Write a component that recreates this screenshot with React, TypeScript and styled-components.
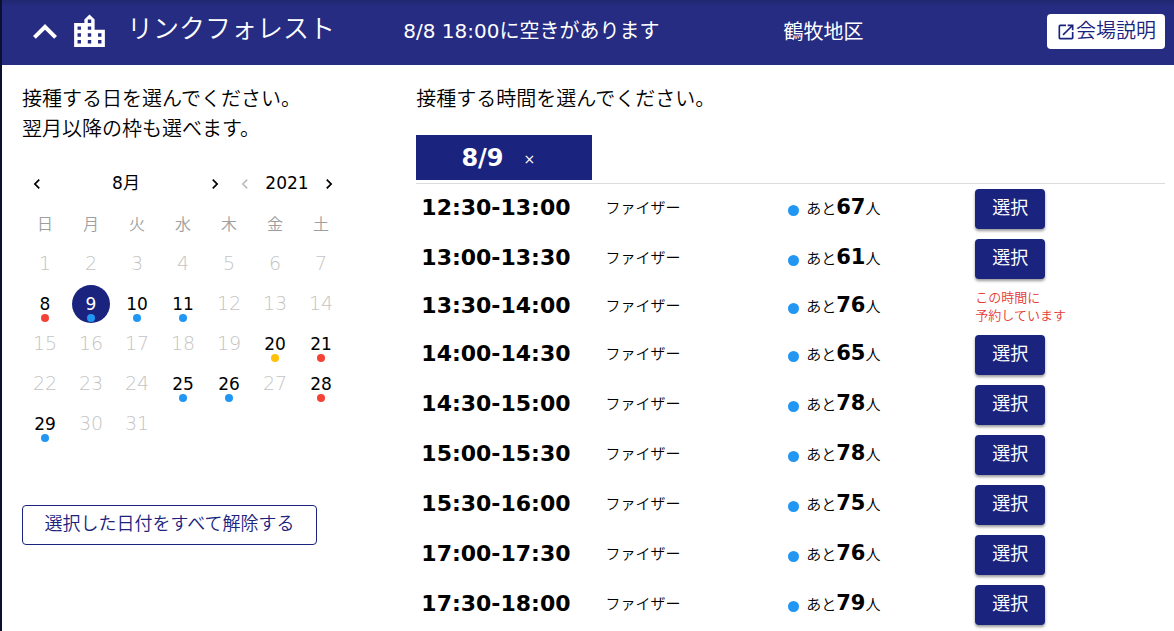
import React from "react";
import styled, { createGlobalStyle } from "styled-components";
import { MdKeyboardArrowUp, MdLocationCity, MdChevronLeft, MdChevronRight, MdOpenInNew } from "react-icons/md";

const NAVY = "#1a237e";
const BLUE = "#2196f3";
const RED = "#f44336";
const AMBER = "#ffc107";

const GlobalStyle = createGlobalStyle`
  * { box-sizing: border-box; }
  body {
    margin: 0;
    background: #fff;
    color: #000;
    font-family: "DejaVu Sans", "Noto Sans CJK JP", sans-serif;
    font-weight: 350;
    font-size: 20px;
    overflow-x: hidden;
    scrollbar-width: none;
  }
  button { font: inherit; cursor: pointer; margin: 0; }
  p { margin: 0; }
`;

const Page = styled.div`
  border-left: 2px solid #0c1030;
  min-height: 100vh;
`;

const Header = styled.header`
  display: grid;
  grid-template-columns: 34.5% 32.7% 1fr;
  align-items: center;
  height: 65px;
  padding: 0 9px 2px 0;
  background: linear-gradient(#20276f, #252c82 6px);
  color: #fff;
`;

const Venue = styled.div`
  display: flex;
  align-items: center;
  padding-left: 19px;
`;

const CollapseButton = styled.button`
  display: flex;
  padding: 0;
  border: 0;
  background: none;
  color: #fff;
  svg { display: block; }
`;

const BuildingIcon = styled(MdLocationCity)`
  margin-right: 17px;
`;

const VenueName = styled.h1`
  margin: 0;
  padding-bottom: 6px;
  font-size: 26px;
  font-weight: 350;
  line-height: 32px;
  white-space: nowrap;
`;

const Status = styled.p`
  padding-bottom: 4px;
  font-weight: 400;
`;

const Area = styled.div`
  display: flex;
  align-items: center;
  justify-content: space-between;
`;

const AreaName = styled.span`
  padding-bottom: 2px;
  font-weight: 400;
`;

const InfoButton = styled.button`
  display: flex;
  align-items: center;
  height: 35px;
  padding: 0 9px;
  border: 0;
  border-radius: 4px;
  background: #fff;
  color: ${NAVY};
  line-height: 35px;
  white-space: nowrap;
`;

const Main = styled.main`
  display: grid;
  grid-template-columns: 34.5% 1fr;
  padding: 19px 9px 0 20px;
`;

const Prompt = styled.p`
  line-height: 30px;
`;

const CalendarNav = styled.div`
  display: grid;
  grid-template-columns: 30px 1fr 30px 30px 54px 30px;
  align-items: center;
  width: 322px;
  height: 40px;
  margin-top: 19px;
  font-size: 17px;
  font-weight: 400;
  line-height: 24px;
  text-align: center;
`;

const NavButton = styled.button`
  display: flex;
  justify-content: center;
  padding: 2px 0 0;
  border: 0;
  background: none;
  color: #000;
  &:disabled { color: #bdbdbd; cursor: default; }
`;

const Calendar = styled.table`
  width: 322px;
  border-collapse: collapse;
  table-layout: fixed;
  th, td { height: 40px; padding: 0; text-align: center; }
  th { font-size: 16px; font-weight: 350; color: #9e9e9e; }
`;

const Day = styled.button<{ $selected?: boolean }>`
  position: relative;
  display: block;
  width: 38px;
  height: 38px;
  margin: 2px auto 0;
  padding: 0;
  border: 0;
  border-radius: 50%;
  background: ${(p) => (p.$selected ? NAVY : "transparent")};
  color: ${(p) => (p.$selected ? "#fff" : "#000")};
  font-size: 17px;
  font-weight: 400;
  line-height: 38px;
  &:disabled {
    margin-top: 0;
    color: #c4c4c4;
    font-size: 19px;
    font-weight: 300;
    line-height: 36px;
    cursor: default;
  }
`;

const DayDot = styled.span<{ $color: string }>`
  position: absolute;
  bottom: 1px;
  left: 15px;
  width: 8px;
  height: 8px;
  border-radius: 50%;
  background: ${(p) => p.$color};
`;

const ClearButton = styled.button`
  display: block;
  width: 295px;
  height: 40px;
  margin-top: 62px;
  padding: 0 0 2px;
  border: 1px solid ${NAVY};
  border-radius: 4px;
  background: #fff;
  color: ${NAVY};
  font-size: 18px;
  line-height: 36px;
  white-space: nowrap;
`;

const DateTabs = styled.div`
  margin-top: 21px;
  padding-bottom: 3px;
  border-bottom: 1px solid #dcdcdc;
`;

const DateTab = styled.button`
  display: flex;
  align-items: center;
  justify-content: center;
  gap: 20px;
  width: 176px;
  height: 45px;
  padding: 0 12px 0 0;
  border: 0;
  background: ${NAVY};
  color: #fff;
  font-size: 24px;
  font-weight: 700;
`;

const CloseMark = styled.span`
  padding-top: 3px;
  font-size: 14px;
  font-weight: 400;
`;

const Slots = styled.table`
  width: 100%;
  border-collapse: collapse;
  table-layout: fixed;
`;

const Slot = styled.tr<{ $reserved?: boolean }>`
  height: ${(p) => (p.$reserved ? 46 : 50)}px;
  th, td { padding: 0 5px; text-align: left; white-space: nowrap; }
`;

const Time = styled.th`
  font-size: 22px;
  font-weight: 700;
  line-height: 36px;
  span { display: block; padding-bottom: 2px; }
`;

const Vaccine = styled.td`
  font-size: 15px;
  span { display: block; padding-bottom: 6px; }
`;

const Remaining = styled.div`
  display: flex;
  align-items: baseline;
  padding-bottom: 4px;
  font-size: 15px;
  strong { font-size: 21px; font-weight: 700; }
`;

const Dot = styled.i`
  width: 11px;
  height: 11px;
  margin-right: 7px;
  border-radius: 50%;
  background: ${BLUE};
  transform: translateY(2px);
`;

const SelectButton = styled.button`
  display: block;
  width: 70px;
  height: 40px;
  padding: 0 0 2px;
  border: 0;
  border-radius: 4px;
  background: ${NAVY};
  box-shadow: 0 2px 3px rgba(0, 0, 0, 0.4);
  color: #fff;
  font-size: 18px;
  font-weight: 400;
  line-height: 38px;
`;

const Reserved = styled.p`
  color: #e53935;
  font-size: 13px;
  line-height: 18px;
`;

const OPEN_DAYS: Record<number, string> = {
  8: RED, 9: BLUE, 10: BLUE, 11: BLUE, 20: AMBER, 21: RED, 25: BLUE, 26: BLUE, 28: RED, 29: BLUE,
};

const SLOTS = [
  { time: "12:30-13:00", left: 67 },
  { time: "13:00-13:30", left: 61 },
  { time: "13:30-14:00", left: 76, reserved: true },
  { time: "14:00-14:30", left: 65 },
  { time: "14:30-15:00", left: 78 },
  { time: "15:00-15:30", left: 78 },
  { time: "15:30-16:00", left: 75 },
  { time: "17:00-17:30", left: 76 },
  { time: "17:30-18:00", left: 79 },
];

const WEEKS = [0, 1, 2, 3, 4].map((w) => [1, 2, 3, 4, 5, 6, 7].map((d) => w * 7 + d));

export default function App() {
  return (
    <Page lang="ja">
      <GlobalStyle />
      <Header>
        <Venue>
          <CollapseButton aria-label="閉じる">
            <MdKeyboardArrowUp size={48} />
          </CollapseButton>
          <BuildingIcon size={41} />
          <VenueName>リンクフォレスト</VenueName>
        </Venue>
        <Status>8/8 18:00に空きがあります</Status>
        <Area>
          <AreaName>鶴牧地区</AreaName>
          <InfoButton>
            <MdOpenInNew size={20} />
            会場説明
          </InfoButton>
        </Area>
      </Header>
      <Main>
        <section>
          <Prompt>
            接種する日を選んでください。
            <br />
            翌月以降の枠も選べます。
          </Prompt>
          <CalendarNav>
            <NavButton aria-label="前の月"><MdChevronLeft size={20} /></NavButton>
            <span>8月</span>
            <NavButton aria-label="次の月"><MdChevronRight size={20} /></NavButton>
            <NavButton aria-label="前の年" disabled><MdChevronLeft size={20} /></NavButton>
            <span>2021</span>
            <NavButton aria-label="次の年"><MdChevronRight size={20} /></NavButton>
          </CalendarNav>
          <Calendar>
            <thead>
              <tr>
                {[..."日月火水木金土"].map((d) => <th key={d} scope="col">{d}</th>)}
              </tr>
            </thead>
            <tbody>
              {WEEKS.map((week) => (
                <tr key={week[0]}>
                  {week.map((d) => (
                    <td key={d}>
                      {d <= 31 && (
                        <Day disabled={!OPEN_DAYS[d]} $selected={d === 9}>
                          {d}
                          {OPEN_DAYS[d] && <DayDot $color={OPEN_DAYS[d]} />}
                        </Day>
                      )}
                    </td>
                  ))}
                </tr>
              ))}
            </tbody>
          </Calendar>
          <ClearButton>選択した日付をすべて解除する</ClearButton>
        </section>
        <section>
          <Prompt>接種する時間を選んでください。</Prompt>
          <DateTabs>
            <DateTab>
              8/9 <CloseMark>×</CloseMark>
            </DateTab>
          </DateTabs>
          <Slots>
            <colgroup>
              <col width="24.6%" />
              <col width="24.4%" />
              <col width="25%" />
              <col width="26%" />
            </colgroup>
            <tbody>
              {SLOTS.map((s) => (
                <Slot key={s.time} $reserved={s.reserved}>
                  <Time scope="row"><span>{s.time}</span></Time>
                  <Vaccine><span>ファイザー</span></Vaccine>
                  <td>
                    <Remaining>
                      <Dot />
                      あと<strong>{s.left}</strong>人
                    </Remaining>
                  </td>
                  <td>
                    {s.reserved ? (
                      <Reserved>この時間に<br />予約しています</Reserved>
                    ) : (
                      <SelectButton>選択</SelectButton>
                    )}
                  </td>
                </Slot>
              ))}
            </tbody>
          </Slots>
        </section>
      </Main>
    </Page>
  );
}
